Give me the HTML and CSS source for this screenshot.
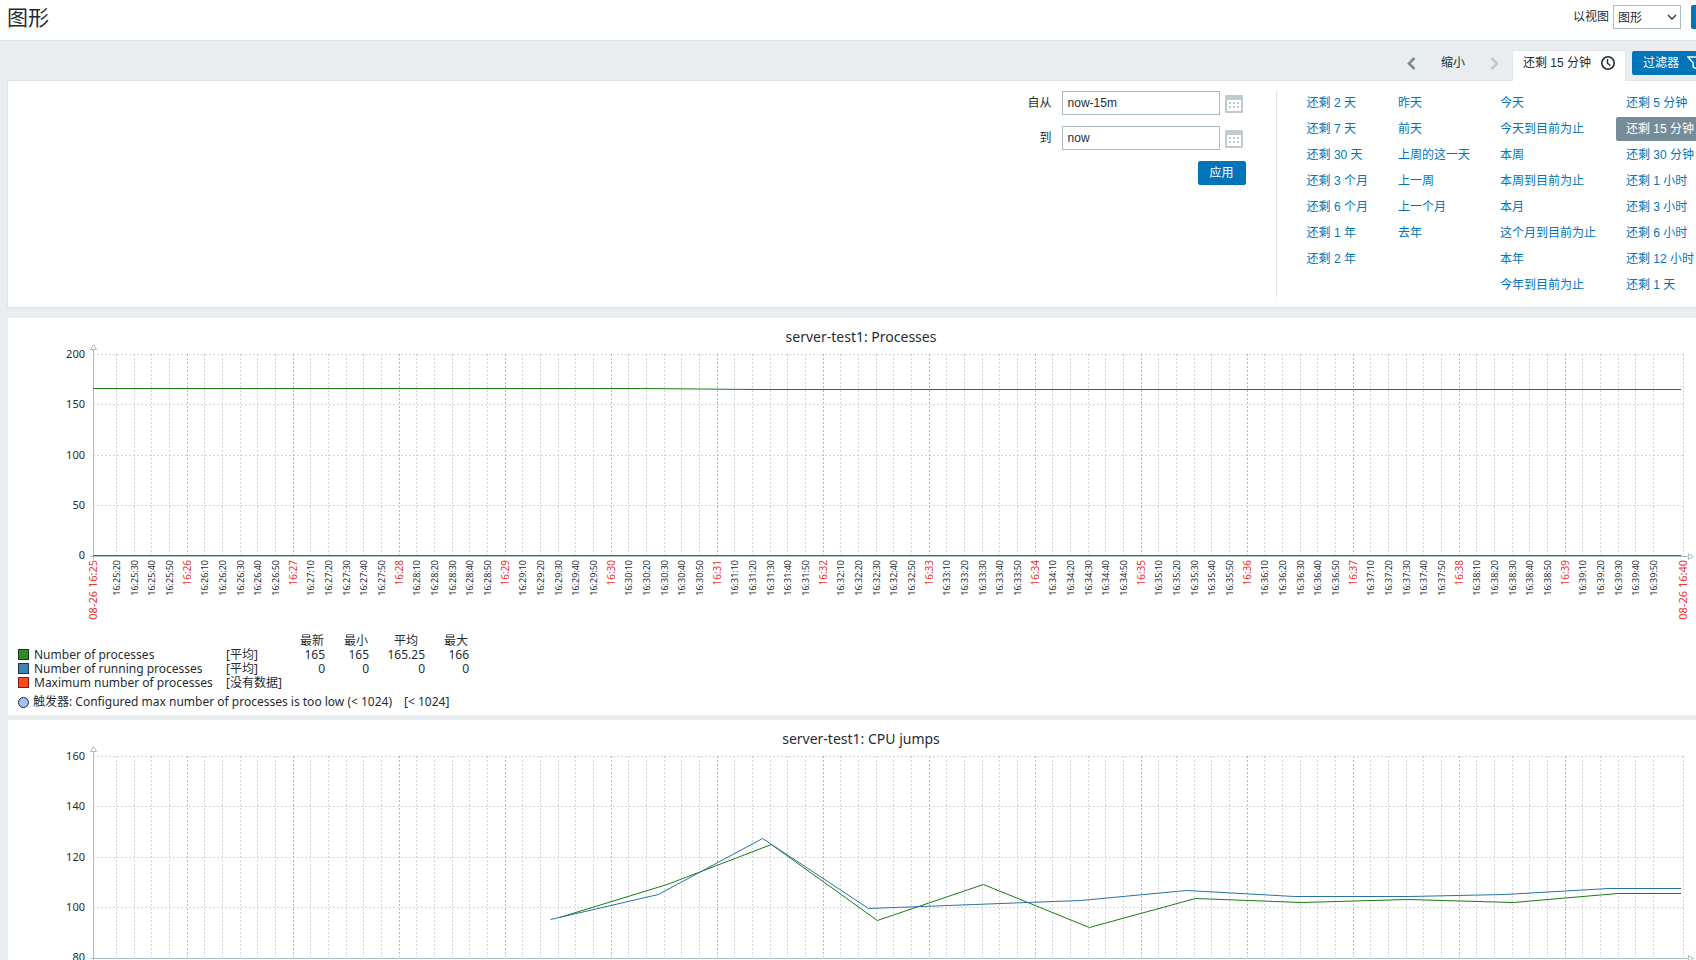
FILE: index.html
```html
<!DOCTYPE html>
<html lang="zh-CN">
<head>
<meta charset="utf-8">
<meta name="viewport" content="width=device-width, initial-scale=1">
<title>图形</title>
<link rel="stylesheet" href="styles.css">
</head>
<body>
<div class="page">
  <header class="header">
    <h1 class="title">图形</h1>
    <div class="view">
      <label for="view-as">以视图</label>
      <span class="select-wrap">
        <select id="view-as" class="select"><option>图形</option><option>值</option></select>
        <svg class="chevron" width="10" height="6" viewBox="0 0 10 6" aria-hidden="true"><path d="M1 1l4 4 4-4" fill="none" stroke="#333" stroke-width="1.4"/></svg>
      </span>
      <button type="button" class="btn btn-square" aria-label="全屏"></button>
    </div>
  </header>

  <nav class="timebar" aria-label="时间">
    <div class="zoom">
      <button type="button" class="plain" aria-label="后退"><svg width="9" height="13" viewBox="0 0 9 13"><path d="M7.5 1L2 6.500l5.500 5.500" fill="none" stroke="#768d99" stroke-width="2.600"/></svg></button>
      <button type="button" class="plain">缩小</button>
      <button type="button" class="plain" aria-label="前进" disabled><svg width="9" height="13" viewBox="0 0 9 13"><path d="M1.500 1L7 6.500 1.500 12" fill="none" stroke="#c0c9ce" stroke-width="2.600"/></svg></button>
    </div>
    <button type="button" class="tab">还剩 15 分钟
      <svg width="14" height="14" viewBox="0 0 14 14" aria-hidden="true"><circle cx="7" cy="7" r="6.200" fill="none" stroke="#1f2c33" stroke-width="1.600"/><path d="M6.500 3v4.200l3 2.300" fill="none" stroke="#1f2c33" stroke-width="1.400"/></svg>
    </button>
    <button type="button" class="btn btn-filter">过滤器
      <svg width="16" height="14" viewBox="0 0 16 14" aria-hidden="true"><path d="M1 1h14L9.800 7v6l-3.600-2V7z" fill="none" stroke="#fff" stroke-width="1.400"/></svg>
    </button>
  </nav>

  <section class="filter">
    <form class="range">
      <label for="from">自从</label>
      <input id="from" class="input" type="text" value="now-15m">
      <button type="button" class="cal" aria-label="选择开始日期"><svg width="18" height="18" viewBox="0 0 18 18"><use href="#cal"/></svg></button>
      <label for="to">到</label>
      <input id="to" class="input" type="text" value="now">
      <button type="button" class="cal" aria-label="选择结束日期"><svg width="18" height="18" viewBox="0 0 18 18"><use href="#cal"/></svg></button>
      <button type="button" class="btn apply">应用</button>
    </form>
    <div class="presets">
      <ul><li><a href="#">还剩 2 天</a></li><li><a href="#">还剩 7 天</a></li><li><a href="#">还剩 30 天</a></li><li><a href="#">还剩 3 个月</a></li><li><a href="#">还剩 6 个月</a></li><li><a href="#">还剩 1 年</a></li><li><a href="#">还剩 2 年</a></li></ul>
      <ul><li><a href="#">昨天</a></li><li><a href="#">前天</a></li><li><a href="#">上周的这一天</a></li><li><a href="#">上一周</a></li><li><a href="#">上一个月</a></li><li><a href="#">去年</a></li></ul>
      <ul><li><a href="#">今天</a></li><li><a href="#">今天到目前为止</a></li><li><a href="#">本周</a></li><li><a href="#">本周到目前为止</a></li><li><a href="#">本月</a></li><li><a href="#">这个月到目前为止</a></li><li><a href="#">本年</a></li><li><a href="#">今年到目前为止</a></li></ul>
      <ul><li><a href="#">还剩 5 分钟</a></li><li><a href="#" class="selected">还剩 15 分钟</a></li><li><a href="#">还剩 30 分钟</a></li><li><a href="#">还剩 1 小时</a></li><li><a href="#">还剩 3 小时</a></li><li><a href="#">还剩 6 小时</a></li><li><a href="#">还剩 12 小时</a></li><li><a href="#">还剩 1 天</a></li></ul>
    </div>
  </section>

  <main class="charts">
    <section class="chart">
      <svg class="plot" id="processes" role="img" aria-label="server-test1: Processes"></svg>
      <table class="legend">
        <thead><tr><th></th><th></th><th class="head">最新</th><th class="head">最小</th><th class="head avg">平均</th><th class="head">最大</th></tr></thead>
        <tbody>
          <tr><td class="name"><i class="swatch green"></i>Number of processes</td><td class="fn">[平均]</td><td>165</td><td>165</td><td>165.25</td><td>166</td></tr>
          <tr><td class="name"><i class="swatch blue"></i>Number of running processes</td><td class="fn">[平均]</td><td>0</td><td>0</td><td>0</td><td>0</td></tr>
          <tr><td class="name"><i class="swatch red"></i>Maximum number of processes</td><td class="fn" colspan="5">[没有数据]</td></tr>
        </tbody>
      </table>
      <p class="trigger"><i class="dot"></i><span>触发器: Configured max number of processes is too low (&lt; 1024)</span><span class="limit">[&lt; 1024]</span></p>
    </section>
    <section class="chart">
      <svg class="plot" id="jumps" role="img" aria-label="server-test1: CPU jumps"></svg>
    </section>
  </main>
</div>

<svg class="defs" aria-hidden="true">
  <symbol id="cal" viewBox="0 0 18 18">
    <path fill="#c0cbd0" fill-rule="evenodd" d="M1 0h16l1 1v16l-1 1H1l-1-1V1zM2 5v11h14V5z"/>
    <path fill="#c0cbd0" d="M4 7h2v2H4zm4 0h2v2H8zm4 0h2v2h-2zM4 11h2v2H4zm4 0h2v2H8zm4 0h2v2h-2z"/>
  </symbol>
</svg>
<script src="charts.js"></script>
</body>
</html>
```
FILE: styles.css
```css
* { box-sizing: border-box; }

body {
  margin: 0;
  height: 100vh;
  overflow: hidden;
  background: #e9edf0;
  color: #1f2c33;
  font: 12px/24px "Liberation Sans", "Noto Sans CJK SC", sans-serif;
}

button, input, select { font: inherit; color: inherit; }
button { cursor: pointer; }

.page { width: calc(100% + 26px); }
.defs { display: none; }

.header {
  display: flex;
  justify-content: space-between;
  align-items: center;
  height: 41px;
  padding: 0 7px;
  background: #fff;
  border-bottom: 1px solid #dfe4e7;
}
.title { margin: 0; font-size: 21px; font-weight: 400; line-height: 36px; padding-bottom: 5px; }
.view { display: flex; align-items: center; padding-bottom: 6px; }
.select-wrap { position: relative; margin: 0 10px 0 4px; }
.select {
  display: block;
  width: 68px;
  height: 24px;
  padding: 0 4px;
  appearance: none;
  background: #fff;
  border: 1px solid #acbbc2;
  border-radius: 0;
}
.chevron { position: absolute; right: 4px; top: 9px; pointer-events: none; }

.btn {
  height: 24px;
  padding: 0 10px;
  border: 1px solid #0275b8;
  border-radius: 2px;
  background: #0275b8;
  color: #fff;
  line-height: 22px;
}
.btn-square { width: 24px; padding: 0; }

.timebar {
  display: flex;
  justify-content: flex-end;
  align-items: flex-start;
  height: 39px;
  padding: 9px 8px 0;
}
.zoom { display: flex; gap: 25px; align-items: center; margin: 1px 13px 0 0; }
.plain { padding: 0; border: 0; background: none; line-height: 24px; }
.plain svg { display: block; }
.tab {
  position: relative;
  display: flex;
  gap: 10px;
  align-items: center;
  height: 31px;
  padding: 0 10px 6px;
  border: 1px solid #dfe4e7;
  border-bottom: 0;
  background: #fff;
}
.btn-filter { display: flex; gap: 8px; align-items: center; margin: 1px 0 0 6px; }

.filter {
  display: flex;
  justify-content: flex-end;
  margin: 0 7px;
  padding: 10px;
  background: #fff;
  border: 1px solid #dfe4e7;
}
.range {
  display: grid;
  grid-template-columns: auto 158px 24px;
  align-content: start;
  row-gap: 11px;
  column-gap: 2px;
  padding-right: 30px;
}
.range label { padding-right: 8px; text-align: right; }
.input { width: 100%; height: 24px; padding: 0 5px; border: 1px solid #acbbc2; border-radius: 0; background: #fff; }
.cal { padding: 4px 3px 2px; border: 0; background: none; }
.cal svg { display: block; }
.apply { grid-column: 2 / 4; justify-self: end; width: 48px; }

.presets { display: flex; gap: 10px; padding-left: 20px; border-left: 1px solid #dfe4e7; }
.presets ul { display: flex; flex-direction: column; gap: 2px; margin: 0; padding: 0; list-style: none; }
.presets a { display: block; padding: 0 10px; border-radius: 2px; color: #0275b8; text-decoration: none; white-space: nowrap; }
.presets .selected { background: #768d99; color: #fff; }

.charts { display: flex; flex-direction: column; gap: 5px; margin: 10px 8px; }
.chart { padding-bottom: 6px; background: #fff; font-family: "Noto Sans", "Noto Sans CJK SC", sans-serif; }
.plot { display: block; width: 100%; height: 316px; }
.plot text { fill: #1f2c33; font-size: 11px; }
.plot .heading { font-size: 14px; }
.plot .minor { font-size: 9px; }
.plot .major { font-size: 10px; fill: #e33734; }
.plot .edge { font-size: 11px; fill: #e33734; }
.grid { stroke: #ccd5d9; stroke-dasharray: 2 2; }
.grid-major { stroke: #acbbc2; stroke-dasharray: 2 2; }
.axis { stroke: #acbbc2; fill: none; }
.series { fill: none; }

.legend { margin-left: 10px; border-collapse: collapse; table-layout: fixed; width: 451px; font-size: 12px; line-height: 14px; }
.legend th, .legend td { height: 14px; padding: 0; font-weight: 400; text-align: right; white-space: nowrap; }
.legend th:nth-child(1) { width: 208px; }
.legend th:nth-child(2) { width: 55px; }
.legend th:nth-child(3) { width: 44px; }
.legend th:nth-child(4) { width: 44px; }
.legend th:nth-child(5) { width: 56px; }
.legend .head { padding-right: 1px; }
.legend .avg { padding-right: 7px; }
.legend .name, .legend .fn { text-align: left; }
.swatch, .dot { display: inline-block; width: 11px; height: 11px; margin-right: 5px; border: 1px solid #1f2c33; vertical-align: -1px; }
.green { background: #348a2b; border-color: #143c10; }
.blue { background: #3f83ae; border-color: #15384e; }
.red { background: #fa4b20; border-color: #7a200a; }
.trigger { display: flex; align-items: center; margin: 5px 0 0 10px; font-size: 12px; line-height: 14px; }
.dot { border-radius: 50%; background: #a9bdfb; margin-right: 4px; }
.limit { margin-left: 12px; }
```
FILE: charts.js
```js
const NS = 'http://www.w3.org/2000/svg';
const LEFT = 85, RIGHT = 31, TOP = 36, BOTTOM = 237;
const START = 7, SPAN = 900; // the range starts at 16:25:07

const charts = [
  {
    id: 'processes', title: 'server-test1: Processes', min: 0, max: 200, step: 50, timeLabels: true,
    series: [
      { color: '#1a7c11', points: [[0, 166], [310, 166], [375, 165], [899, 165]] },
      { color: '#2774a4', points: [[0, 0], [899, 0]] }
    ]
  },
  {
    id: 'jumps', title: 'server-test1: CPU jumps', min: 80, max: 160, step: 20, timeLabels: false,
    series: [
      { color: '#1a7c11', points: [[264, 96], [325, 109], [384, 125], [444, 94.9], [504, 109.2], [564, 91.8], [624, 103.6], [684, 101.7], [744, 102.9], [804, 101.7], [863, 105.6], [899, 105.6]] },
      { color: '#2774a4', points: [[259, 95.3], [320, 105], [379, 127.5], [439, 99.7], [499, 101.2], [559, 102.8], [619, 106.8], [680, 104.4], [745, 104.4], [799, 105.2], [858, 107.6], [899, 107.6]] }
    ]
  }
];

function add(svg, tag, attrs, text) {
  const el = document.createElementNS(NS, tag);
  for (const key in attrs) el.setAttribute(key, attrs[key]);
  if (text !== undefined) el.textContent = text;
  svg.appendChild(el);
}

function draw(chart) {
  const svg = document.getElementById(chart.id);
  svg.replaceChildren();
  const width = svg.clientWidth;
  const right = width - RIGHT;
  const x = s => LEFT + s * (right - LEFT) / SPAN;
  const y = v => Math.round(BOTTOM - (v - chart.min) * (BOTTOM - TOP) / (chart.max - chart.min)) + 0.5;
  const base = BOTTOM + 1.5;
  const line = (cls, x1, y1, x2, y2) => add(svg, 'line', { class: cls, x1, y1, x2, y2 });
  const label = (cls, px, text) => {
    if (!chart.timeLabels) return;
    add(svg, 'text', { class: cls, 'text-anchor': 'end', transform: `translate(${px + 4} 242) rotate(-90)` }, text);
  };

  add(svg, 'text', { class: 'heading', x: width / 2, y: 24, 'text-anchor': 'middle' }, chart.title);

  for (let v = chart.min; v <= chart.max; v += chart.step) {
    if (v > chart.min) line('grid', LEFT, y(v), right, y(v));
    add(svg, 'text', { x: 77, y: y(v) + 3.5, 'text-anchor': 'end' }, v);
  }

  label('edge', LEFT, '08-26 16:25');
  for (let t = 20; t < START + SPAN - 10; t += 10) {
    const px = Math.round(x(t - START)) + 0.5;
    const minute = 25 + Math.floor(t / 60);
    const onMinute = t % 60 === 0;
    line(onMinute ? 'grid-major' : 'grid', px, TOP, px, BOTTOM);
    label(onMinute ? 'major' : 'minor', Math.floor(px), onMinute ? `16:${minute}` : `16:${minute}:${t % 60}`);
  }
  line('grid', right + 0.5, TOP, right + 0.5, BOTTOM);
  label('edge', right, '08-26 16:40');

  const ax = LEFT + 0.5;
  add(svg, 'path', { class: 'axis', d: `M${ax} 31V${base + 3}M${ax - 3} ${base}H${right + 5}` });
  add(svg, 'path', { class: 'axis', d: `M${ax} 26.5l-3 5h6zM${right + 10.5} ${base}l-5-3v6z` });

  for (const s of chart.series) {
    add(svg, 'polyline', {
      class: 'series', stroke: s.color,
      points: s.points.map(([t, v]) => `${x(t)},${y(v)}`).join(' ')
    });
  }
}

const render = () => charts.forEach(draw);
render();
window.addEventListener('resize', render);
```
